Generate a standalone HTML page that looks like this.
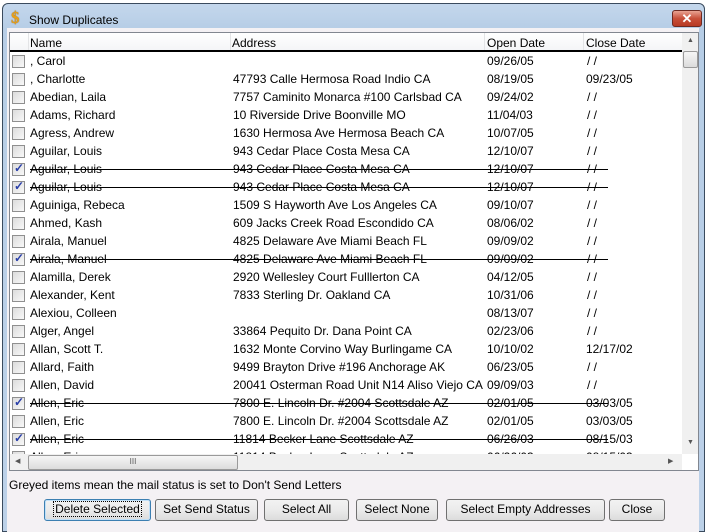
<!DOCTYPE html>
<html><head><style>
*{margin:0;padding:0;box-sizing:border-box}
body{width:707px;height:532px;overflow:hidden;background:#fff;font-family:"Liberation Sans",sans-serif;font-size:12px;position:relative}
.win{position:absolute;left:2px;top:3px;width:703px;height:529px;border:1px solid #3a4b5e;border-radius:6px 6px 0 0;background:linear-gradient(#c4d7ec,#b6cde6 25px,#bcd1e8);}
.title{position:absolute;left:26px;top:9px;font-size:12px;color:#000}
.dollar{position:absolute;left:8px;top:4px;color:#e8a018;font-weight:bold;font-size:17px;font-family:"Liberation Serif",serif;text-shadow:0 0 1px #7a4a00}
.xbtn{position:absolute;left:669px;top:6px;width:30px;height:17px;border:1px solid #6e2a22;border-radius:3px;background:linear-gradient(#e9a393,#c8503a 50%,#b83a24);color:#fff;font-weight:bold;font-size:13px;text-align:center;line-height:15px}
.body{position:absolute;background:#f4f1f4}
.list{position:absolute;left:9px;top:32px;width:690px;height:439px;border:1px solid #828790;background:#fff;overflow:hidden}
.hdr{position:absolute;left:0;top:0;width:672px;height:19px;background:linear-gradient(#fff,#f4f5f7);border-bottom:2px solid #000}
.hdr span{position:absolute;top:3px}
.hdr i{position:absolute;top:0;width:1px;height:17px;background:#e3e4e6}
.row{position:absolute;left:0;height:18px;width:672px}
.row span{position:absolute;top:2px;white-space:nowrap;overflow:hidden}
.cb{position:absolute;left:2px;top:3px;width:13px;height:13px;border:1px solid #8f8f8f;background:linear-gradient(135deg,#dcdcdc,#f8f8f8)}
.cb.c::after{content:"✓";position:absolute;left:1px;top:-3px;color:#2a3fa8;font-weight:bold;font-size:12px}
.st{position:absolute;left:20px;top:9px;width:578px;height:1px;background:#000}
.vs{position:absolute;left:672px;top:0;width:17px;height:421px;background:#f0f0f0}
.hs{position:absolute;left:0;top:421px;width:672px;height:17px;background:#f0f0f0}
.thumb{position:absolute;border:1px solid #9a9a9a;border-radius:2px;background:linear-gradient(#f6f6f6,#dcdcdc)}
.note{position:absolute;left:9px;top:478px}
.btn{position:absolute;top:499px;height:22px;border:1px solid #707070;border-radius:3px;background:linear-gradient(#f2f2f2,#ebebeb 50%,#dcdcdc);text-align:center;line-height:19px;font-size:12px}
.btn.d{border-color:#3c7fb1;box-shadow:inset 0 0 0 1px #c0e0f8}
.btn.d b{font-weight:normal;outline:1px dotted #000;padding:0 1px}
</style></head><body>
<div class="win">
<div class="dollar">$</div><div class="title">Show Duplicates</div>
<div class="xbtn">✕</div>
</div>
<div class="body" style="left:7px;top:28px;width:692px;height:504px"></div>
<div class="list">
<div class="hdr"><i style="left:18px"></i><span style="left:20px">Name</span><i style="left:220px"></i><span style="left:222px">Address</span><i style="left:474px"></i><span style="left:477px">Open Date</span><i style="left:573px"></i><span style="left:576px">Close Date</span></div>
<div id="rows"></div>
<div class="vs"><div style="position:absolute;left:5px;top:4px;font-size:7px;color:#555">▲</div><div class="thumb" style="left:1px;top:18px;width:15px;height:17px"></div><div style="position:absolute;left:5px;top:406px;font-size:7px;color:#555">▼</div></div>
<div class="hs"><div style="position:absolute;left:5px;top:3px;font-size:7px;color:#555">◀</div><div class="thumb" style="left:18px;top:1px;width:210px;height:15px;text-align:center;font-size:8px;line-height:12px;color:#555">III</div><div style="position:absolute;left:658px;top:3px;font-size:7px;color:#555">▶</div></div>
<div style="position:absolute;left:672px;top:421px;width:17px;height:17px;background:#fff"></div>
</div>
<div class="note">Greyed items mean the mail status is set to Don't Send Letters</div>
<div class="btn d" style="left:44px;width:107px"><b>Delete Selected</b></div>
<div class="btn" style="left:155px;width:103px">Set Send Status</div>
<div class="btn" style="left:264px;width:85px">Select All</div>
<div class="btn" style="left:356px;width:82px">Select None</div>
<div class="btn" style="left:446px;width:159px">Select Empty Addresses</div>
<div class="btn" style="left:609px;width:56px">Close</div>
<script>
var d=[
[0,", Carol","","09/26/05","/ /"],
[0,", Charlotte","47793 Calle Hermosa Road Indio CA","08/19/05","09/23/05"],
[0,"Abedian, Laila","7757 Caminito Monarca #100 Carlsbad CA","09/24/02","/ /"],
[0,"Adams, Richard","10 Riverside Drive Boonville MO","11/04/03","/ /"],
[0,"Agress, Andrew","1630 Hermosa Ave Hermosa Beach CA","10/07/05","/ /"],
[0,"Aguilar, Louis","943 Cedar Place Costa Mesa CA","12/10/07","/ /"],
[1,"Aguilar, Louis","943 Cedar Place Costa Mesa CA","12/10/07","/ /"],
[1,"Aguilar, Louis","943 Cedar Place Costa Mesa CA","12/10/07","/ /"],
[0,"Aguiniga, Rebeca","1509 S Hayworth Ave Los Angeles CA","09/10/07","/ /"],
[0,"Ahmed, Kash","609 Jacks Creek Road Escondido CA","08/06/02","/ /"],
[0,"Airala, Manuel","4825 Delaware Ave Miami Beach FL","09/09/02","/ /"],
[1,"Airala, Manuel","4825 Delaware Ave Miami Beach FL","09/09/02","/ /"],
[0,"Alamilla, Derek","2920 Wellesley Court Fulllerton CA","04/12/05","/ /"],
[0,"Alexander, Kent","7833 Sterling Dr. Oakland CA","10/31/06","/ /"],
[0,"Alexiou, Colleen","","08/13/07","/ /"],
[0,"Alger, Angel","33864 Pequito Dr. Dana Point CA","02/23/06","/ /"],
[0,"Allan, Scott T.","1632 Monte Corvino Way Burlingame CA","10/10/02","12/17/02"],
[0,"Allard, Faith","9499 Brayton Drive #196 Anchorage AK","06/23/05","/ /"],
[0,"Allen, David","20041 Osterman Road Unit N14 Aliso Viejo CA","09/09/03","/ /"],
[1,"Allen, Eric","7800 E. Lincoln Dr. #2004 Scottsdale AZ","02/01/05","03/03/05"],
[0,"Allen, Eric","7800 E. Lincoln Dr. #2004 Scottsdale AZ","02/01/05","03/03/05"],
[1,"Allen, Eric","11814 Becker Lane Scottsdale AZ","06/26/03","08/15/03"],
[0,"Allen, Eric","11814 Becker Lane Scottsdale AZ","06/26/03","08/15/03"]];
var h="";d.forEach(function(r,i){h+='<div class="row" style="top:'+(19+i*18)+'px"><div class="cb'+(r[0]?' c':'')+'"></div><span style="left:20px">'+r[1]+'</span><span style="left:223px;width:250px">'+r[2]+'</span><span style="left:477px">'+r[3]+'</span><span style="left:'+(r[4]=="/ /"?577:576)+'px">'+r[4]+'</span>'+(r[0]?'<div class="st"></div>':'')+'</div>';});
document.getElementById("rows").innerHTML=h;
</script>
</body></html>
